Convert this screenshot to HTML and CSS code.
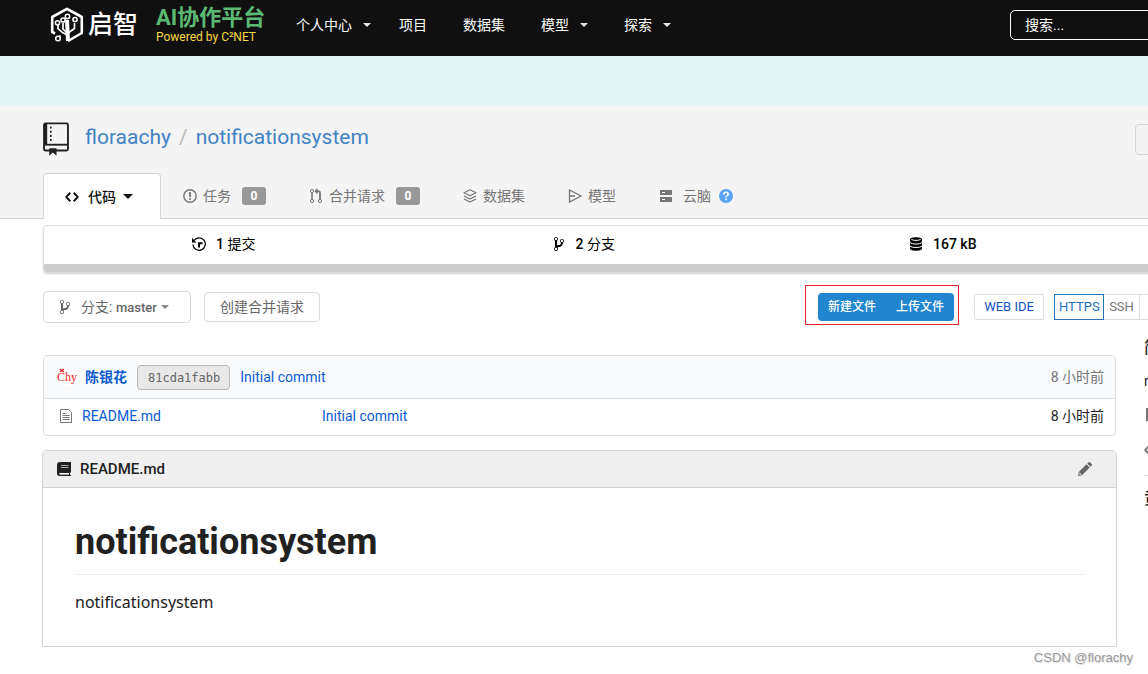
FILE: index.html
```html
<!DOCTYPE html>
<html lang="zh-CN">
<head>
<meta charset="utf-8">
<meta name="viewport" content="width=device-width, initial-scale=1">
<title>floraachy/notificationsystem</title>
<link rel="stylesheet" href="styles.css">
</head>
<body>
<svg class="sprite" aria-hidden="true">
  <symbol id="branch" viewBox="0 0 10 16"><path d="M10 5c0-1.11-.89-2-2-2a1.993 1.993 0 0 0-1 3.72v.3c-.02.52-.23.98-.63 1.38-.4.4-.86.61-1.38.63-.83.02-1.48.16-2 .45V4.72a1.993 1.993 0 0 0-1-3.72C.88 1 0 1.89 0 3a2 2 0 0 0 1 1.72v6.56c-.59.35-1 .99-1 1.72 0 1.11.89 2 2 2 1.11 0 2-.89 2-2 0-.53-.2-1-.53-1.36.09-.06.48-.41.59-.47.25-.11.56-.17.94-.17 1.05-.05 1.95-.45 2.75-1.25S8.95 7.77 9 6.73h-.02C9.59 6.37 10 5.73 10 5zM2 1.8c.66 0 1.2.55 1.2 1.2 0 .65-.55 1.2-1.2 1.2C1.35 4.2.8 3.65.8 3c0-.65.55-1.2 1.2-1.2zm0 12.41c-.66 0-1.2-.55-1.2-1.2 0-.65.55-1.2 1.2-1.2.65 0 1.2.55 1.2 1.2 0 .65-.55 1.2-1.2 1.2zm6-8c-.66 0-1.2-.55-1.2-1.2 0-.65.55-1.2 1.2-1.2.65 0 1.2.55 1.2 1.2 0 .65-.55 1.2-1.2 1.2z"/></symbol>
  <symbol id="code" viewBox="0 0 14 16"><path d="M9.500 3L8 4.500 11.500 8 8 11.500 9.500 13 14 8 9.500 3zm-5 0L0 8l4.500 5L6 11.500 2.500 8 6 4.500 4.500 3z"/></symbol>
</svg>

<header class="topbar">
  <a class="brand" href="#">
    <svg class="brand-mark" viewBox="0 0 34 36" fill="none" stroke="#fff" stroke-width="2.600" stroke-linejoin="round" aria-hidden="true">
      <path d="M5 26.500L2.200 25V10L17 1.800 31.800 10v16L18 34"/>
      <path d="M17 13l1 21" stroke-width="4"/>
      <path d="M17.500 28l-5.500-2.800-4-3.500V18M24.500 16v5.500L18 26M13 16v6l4 4M10.500 28.500l-2 2" stroke-width="1.700"/>
      <g stroke-width="1.500" fill="#101010"><circle cx="17.500" cy="9.500" r="2.200"/><circle cx="25" cy="12.500" r="2.100"/><circle cx="13" cy="13" r="2.100"/><circle cx="7.500" cy="15.800" r="2.100"/><circle cx="8" cy="31.500" r="2.300"/></g>
    </svg>
    <span class="brand-name">启智</span>
  </a>
  <a class="slogan" href="#"><span class="slogan-title">AI协作平台</span><span class="slogan-sub">Powered by C²NET</span></a>
  <nav class="nav">
    <a class="nav-item nav-home" href="#">个人中心<i class="caret"></i></a>
    <a class="nav-item" href="#">项目</a>
    <a class="nav-item" href="#">数据集</a>
    <a class="nav-item" href="#">模型<i class="caret"></i></a>
    <a class="nav-item" href="#">探索<i class="caret"></i></a>
  </nav>
  <input class="search" type="text" placeholder="搜索..." aria-label="搜索">
</header>
<div class="banner"></div>

<div class="repo-head">
  <div class="wide title-row">
    <svg class="repo-icon" viewBox="0 0 25 32" fill="none" stroke="#212121" aria-hidden="true"><rect x="1" y="1" width="23" height="26" rx="1.500" stroke-width="1.800"/><path d="M2.500 1v20" stroke-width="3"/><path d="M1 21.500h23" stroke-width="1.800"/><path d="M7.500 4v16" stroke-width="1.600" stroke-dasharray="2 2"/><path d="M6 25h7v7l-3.500-3L6 32z" fill="#212121" stroke="none"/></svg>
    <h2 class="repo-title"><a href="#">floraachy</a><span class="divider">/</span><a href="#">notificationsystem</a></h2>
    <button class="watch" type="button" aria-label="关注"></button>
  </div>
  <nav class="wide tabs">
    <a class="tab active" href="#"><svg class="ico tall" fill="currentColor" aria-hidden="true"><use href="#code"/></svg>代码<i class="caret"></i></a>
    <a class="tab" href="#"><svg class="ico" viewBox="0 0 14 14" fill="none" stroke="currentColor" aria-hidden="true"><circle cx="7" cy="7" r="6.200" stroke-width="1.400"/><path d="M7 3v5M7 9.300v1.700" stroke-width="1.800"/></svg>任务<span class="badge">0</span></a>
    <a class="tab" href="#"><svg class="ico tall" viewBox="0 0 14 16" fill="none" stroke="currentColor" aria-hidden="true"><circle cx="3" cy="3" r="1.600"/><circle cx="3" cy="13" r="1.600"/><circle cx="11" cy="13" r="1.600"/><path d="M3 4.500v7" stroke-width="1.600"/><path d="M11 11.500V5q0-1.800-2-1.800H7.500" stroke-width="1.800"/><path d="M8.500 0v6.200l-3.200-3z" fill="currentColor" stroke="none"/></svg>合并请求<span class="badge">0</span></a>
    <a class="tab" href="#"><svg class="ico" viewBox="0 0 14 14" fill="none" stroke="currentColor" stroke-width="1.200" stroke-linejoin="round" aria-hidden="true"><path d="M7 .8l6 3-6 3-6-3z"/><path d="M1 7l6 3 6-3M1 10l6 3 6-3"/></svg>数据集</a>
    <a class="tab" href="#"><svg class="ico" viewBox="0 0 14 14" fill="none" stroke="currentColor" stroke-width="1.300" aria-hidden="true"><path d="M1.500 1L13 7 1.500 13zM1.500 7H7"/></svg>模型</a>
    <a class="tab cloud" href="#"><svg class="ico" viewBox="0 0 14 14" aria-hidden="true"><path d="M1 1h12v5H1zM1 8h12v5H1z" fill="currentColor"/><path d="M3 3.500h3M3 10.500h3" stroke="#fff"/></svg>云脑<svg class="help" viewBox="0 0 14 14" aria-hidden="true"><circle cx="7" cy="7" r="7" fill="#5aa5fa"/><path d="M4.800 5.500q0-2.200 2.200-2.200t2.200 1.900q0 1-1.200 1.700-1 .5-1 1.400M7 9.600v1.600" fill="none" stroke="#fff" stroke-width="1.600"/></svg></a>
  </nav>
</div>

<section class="wide stats">
  <div class="stat-cells">
    <a class="stat" href="#"><svg class="ico" viewBox="0 0 14 14" fill="none" stroke="currentColor" stroke-width="1.300" aria-hidden="true"><path d="M2 3.500a6.200 6.200 0 1 1-1.100 4"/><path d="M0 1v4.500h4.500z" fill="currentColor" stroke="none"/><path d="M7 10.500V6.300h3.500" stroke-width="2"/></svg><span><b>1</b> 提交</span></a>
    <a class="stat" href="#"><svg class="ico tall" fill="currentColor" aria-hidden="true"><use href="#branch"/></svg><span><b>2</b> 分支</span></a>
    <span class="stat"><svg class="ico tall" viewBox="0 0 14 16" aria-hidden="true"><path d="M1 3.500C1 .5 13 .5 13 3.500v9c0 3-12 3-12 0z" fill="currentColor"/><path d="M2.500 3.500c2 1.200 7 1.200 9 0M1 6.500c2 2 10 2 12 0M1 10c2 2 10 2 12 0" fill="none" stroke="#fff"/></svg><b>167 kB</b></span>
    <span class="stat"></span>
  </div>
  <div class="lang-bar"></div>
</section>

<div class="wide columns">
  <main class="main">
    <div class="toolbar">
      <button class="btn branch-btn" type="button"><svg class="ico tall" fill="currentColor" aria-hidden="true"><use href="#branch"/></svg><span>分支: <b>master</b></span><i class="caret"></i></button>
      <button class="btn" type="button">创建合并请求</button>
      <div class="file-actions"><button type="button">新建文件</button><button type="button">上传文件</button><span class="mark"></span></div>
      <button class="small-btn ide" type="button">WEB IDE</button>
      <div class="clone"><button class="small-btn on" type="button">HTTPS</button><button class="small-btn" type="button">SSH</button><input class="clone-url" type="text" aria-label="仓库地址" readonly></div>
    </div>

    <table class="files">
      <thead><tr><th colspan="2"><div class="commit">
        <svg class="avatar" viewBox="0 0 20 20" role="img" aria-label="chy"><circle cx="10" cy="10" r="10" fill="#fff"/><text x="0" y="14">Chy</text><path d="M3 2l4 3M7 2L3 5" stroke="#e22" stroke-width="1.300"/></svg>
        <a class="author" href="#">陈银花</a><a class="sha" href="#">81cda1fabb</a><a href="#">Initial commit</a></div></th><th class="age">8 小时前</th></tr></thead>
      <tbody><tr><td class="name"><a href="#"><svg class="ico" viewBox="0 0 14 14" fill="none" stroke="#767676" aria-hidden="true"><path d="M1.500.500h8l3 3v10h-11z"/><path d="M3.500 4.500h4M3.500 6.500h7M3.500 8.500h7M3.500 10.500h7"/></svg>README.md</a></td><td><a href="#">Initial commit</a></td><td class="age">8 小时前</td></tr></tbody>
    </table>

    <article class="readme">
      <h4 class="readme-head"><svg class="ico tall" viewBox="0 0 14 16" aria-hidden="true"><path d="M3 1h11v10.500h-1V14h1v1H3q-3 0-3-2.500V4q0-3 3-3z" fill="#212121"/><path d="M4 4.500h7.500M4 6.500h7.500" stroke="#aaa"/><path d="M2.500 12.800H12" stroke="#fff" stroke-width="1.600"/></svg>README.md
        <a class="edit" href="#" aria-label="编辑"><svg viewBox="0 0 14 14" fill="#666" aria-hidden="true"><path d="M0 14l.8-4L8.500 2.300l3.200 3.200L4 13.200zM9.300 1.500L10.600.3q.7-.6 1.400 0L13.700 2q.6.700 0 1.400l-1.200 1.300z"/><path d="M1.500 10.500l2 2-2 .5z" fill="#efefef"/></svg></a></h4>
      <div class="readme-body"><h1>notificationsystem</h1><p>notificationsystem</p></div>
    </article>
  </main>

  <aside class="side">
    <h4>简介</h4>
    <p>notificationsystem</p>
    <svg class="ico" viewBox="0 0 14 14" aria-hidden="true"><path d="M2 0h10v14l-5-4-5 4z" fill="#767676"/></svg>
    <svg class="ico tall" fill="#767676" aria-hidden="true"><use href="#code"/></svg>
    <h4 class="contributors">贡献者</h4>
  </aside>
</div>
<div class="watermark">CSDN @florachy</div>
</body>
</html>
```
FILE: styles.css
```css
* { box-sizing: border-box; }
body {
  margin: 0;
  position: relative;
  min-height: 100vh;
  overflow-x: hidden;
  background: #fff;
  color: #212121;
  font: 14px/20px Roboto, "Noto Sans CJK SC", sans-serif;
}
a { color: #0b5bd3; text-decoration: none; }
button, input { font: inherit; }
button { cursor: pointer; }
h1, h2, h4, p { margin: 0; }
b { font-weight: 700; }
.sprite { position: absolute; width: 0; height: 0; }
.ico { width: 14px; height: 14px; flex: none; }
.tall { height: 16px; }
.caret { border: 5px solid transparent; border-top-color: currentColor; border-bottom: 0; }

/* content runs past the right edge of narrow windows */
.wide { margin-left: 43px; margin-right: -335px; }

.topbar { display: flex; align-items: center; height: 56px; padding: 0 0 7px 50px; background: #101010; overflow: hidden; }
.brand { display: flex; align-items: center; gap: 4px; color: #fff; }
.brand-mark { width: 34px; height: 36px; }
.brand-name { font-size: 25px; line-height: 36px; font-weight: 500; }
.slogan { display: flex; flex-direction: column; margin-left: 18px; width: 111px; white-space: nowrap; }
.slogan-title { color: #5bb973; font-size: 22px; line-height: 24px; font-weight: 700; }
.slogan-sub { color: #fadb45; font-size: 12px; line-height: 14px; }
.nav { display: flex; margin-left: 11px; }
.nav-item { display: flex; align-items: center; gap: 11px; padding: 0 18px; color: #fff; white-space: nowrap; line-height: 18px; }
.nav-item .caret { border-width: 4px; border-bottom: 0; color: #e8e8e8; }
.nav-home { padding-right: 10px; }
.search { flex: none; width: 240px; height: 30px; margin: 0 -102px 0 auto; padding: 0 14px; background: transparent; border: 1px solid #fff; border-radius: 5px; color: #fff; }
.search::placeholder { color: #fff; opacity: 1; }
.banner { height: 50px; background: #e4f4f4; }

.repo-head { background: #f4f4f4; border-bottom: 1px solid #d4d4d5; padding-top: 16px; }
.title-row { display: flex; height: 51px; align-items: flex-start; }
.repo-icon { width: 26px; height: 34px; }
.repo-title { margin-left: 16px; font-size: 21px; line-height: 30px; font-weight: 400; }
.repo-title a { color: #4183c4; }
.divider { margin: 0 8px; color: #bbb; }
.watch { width: 300px; height: 31px; margin: 2px 48px 0 auto; background: transparent; border: 1px solid #d4d4d5; border-radius: 4px; }
.tabs { display: flex; align-items: stretch; height: 46px; margin-bottom: -1px; }
.tab { display: flex; align-items: center; padding: 0 21px 0 22px; color: #767676; }
.tab .ico { margin-right: 6px; }
.active { width: 118px; padding: 0 21px; background: #fff; border: 1px solid #d4d4d5; border-bottom: 0; border-radius: 4px 4px 0 0; color: #111; font-weight: 500; }
.active .ico { margin-right: 9px; }
.active .caret { margin-left: 7px; }
.badge { margin-left: 11px; width: 24px; height: 18px; border-radius: 3px; background: #999; color: #fff; font-size: 12px; line-height: 18px; font-weight: 700; text-align: center; }
.cloud .ico { margin-right: 10px; }
.help { width: 14px; height: 14px; margin-left: 8px; }

.stats { margin-top: 6px; border: 1px solid #ddd; border-radius: 4px; overflow: hidden; box-shadow: 0 1px 2px #ccc; }
.stat-cells { display: grid; grid-template-columns: repeat(4, 1fr); height: 38px; padding-bottom: 2px; }
.stat { display: flex; align-items: center; justify-content: center; gap: 10px; color: #000; }
.stat b { font-weight: 500; }
.lang-bar { height: 8px; background: #ccc; }

.columns { display: flex; gap: 28px; margin-top: 18px; }
.main { flex: 1; min-width: 0; }
.toolbar { display: flex; align-items: center; height: 32px; white-space: nowrap; }
.btn { height: 30px; padding: 0 15px; margin-right: 13px; background: #fff; border: 1px solid #d9d9db; border-radius: 4px; color: #666; }
.branch-btn { display: flex; align-items: center; width: 148px; height: 32px; padding: 0 14px; }
.branch-btn b { font-weight: 500; font-size: 13px; }
.branch-btn .ico { margin-right: 9px; }
.branch-btn .caret { margin-left: 4px; border-width: 4px; border-bottom: 0; color: #888; }
.file-actions { position: relative; display: flex; margin-left: auto; border-radius: 4px; background: #2185d0; }
.file-actions button { width: 68px; height: 28px; padding: 0; border: 0; background: none; color: #fff; font-size: 12px; font-weight: 500; }
.mark { position: absolute; inset: -8px -5px -4px -13px; border: 1px solid #e8222e; pointer-events: none; }
.small-btn { height: 26px; padding: 0 4px; border: 1px solid #dededf; background: #fff; color: #777; font-size: 13px; }
.ide { width: 70px; margin: 0 10px 0 20px; border-radius: 3px 0 0 3px; color: #1254c4; }
.clone { display: flex; flex: none; width: 62px; }
.on { width: 50px; flex: none; border-color: #2173b8; color: #2173b8; }
.clone .small-btn:not(.on) { width: 36px; flex: none; border-left: 0; }
.clone-url { flex: none; width: 200px; height: 26px; border: 1px solid #dededf; border-left: 0; background: #fff; }

.files { width: 100%; margin-top: 32px; border: 1px solid #dcddde; border-spacing: 0; border-radius: 4px; }
.files th { height: 43px; padding: 0 11px 0 13px; background: #f9fafc; border-bottom: 1px solid #dcddde; font-weight: 400; text-align: left; }
.files td { height: 36px; padding: 0 11px 2px 0; }
.files .name { width: 278px; padding-left: 15px; }
.name a { display: flex; align-items: center; gap: 9px; }
.files .age { text-align: right; }
.files th.age { color: #767676; }
.commit { display: flex; align-items: center; }
.avatar { width: 20px; height: 20px; margin-right: 8px; }
.avatar text { font: 12px "Liberation Serif", serif; fill: #e22; }
.author { font-weight: 700; margin-right: 10px; }
.sha { height: 25px; padding: 0 9px 0 10px; margin-right: 10px; border: 1px solid #b8b8ba; border-radius: 4px; background: #e8e8e8; color: #666; font: 12px/25px "DejaVu Sans Mono", monospace; }

.readme { margin: 14px -1px 0; border: 1px solid #d4d4d5; border-radius: 4px 4px 0 0; }
.readme-head { display: flex; align-items: center; gap: 9px; height: 37px; padding: 0 24px 0 14px; background: #efefef; border-bottom: 1px solid #d4d4d5; font-size: 15px; font-weight: 500; }
.edit { margin-left: auto; height: 14px; }
.edit svg { display: block; width: 14px; height: 14px; }
.readme-body { padding: 32px; }
.readme-body h1 { padding-bottom: 10px; border-bottom: 1px solid #eee; font-size: 36px; line-height: 44px; font-weight: 700; }
.readme-body p { margin-top: 15px; font: 16px/24px "Noto Sans", sans-serif; }

.side { width: 339px; padding-top: 46px; }
.side h4 { font-size: 16px; line-height: 22px; font-weight: 500; }
.side p { margin-top: 12px; }
.side .ico { display: block; margin-top: 17px; }
.side .ico + .ico { margin-top: 20px; }
.side .contributors { margin-top: 17px; padding-top: 12px; border-top: 1px solid #ddd; }

.watermark { position: absolute; right: 15px; bottom: 6px; color: #999; font: 13px/20px "Liberation Sans", sans-serif; text-shadow: 1px 1px 1px #ddd; }
```
